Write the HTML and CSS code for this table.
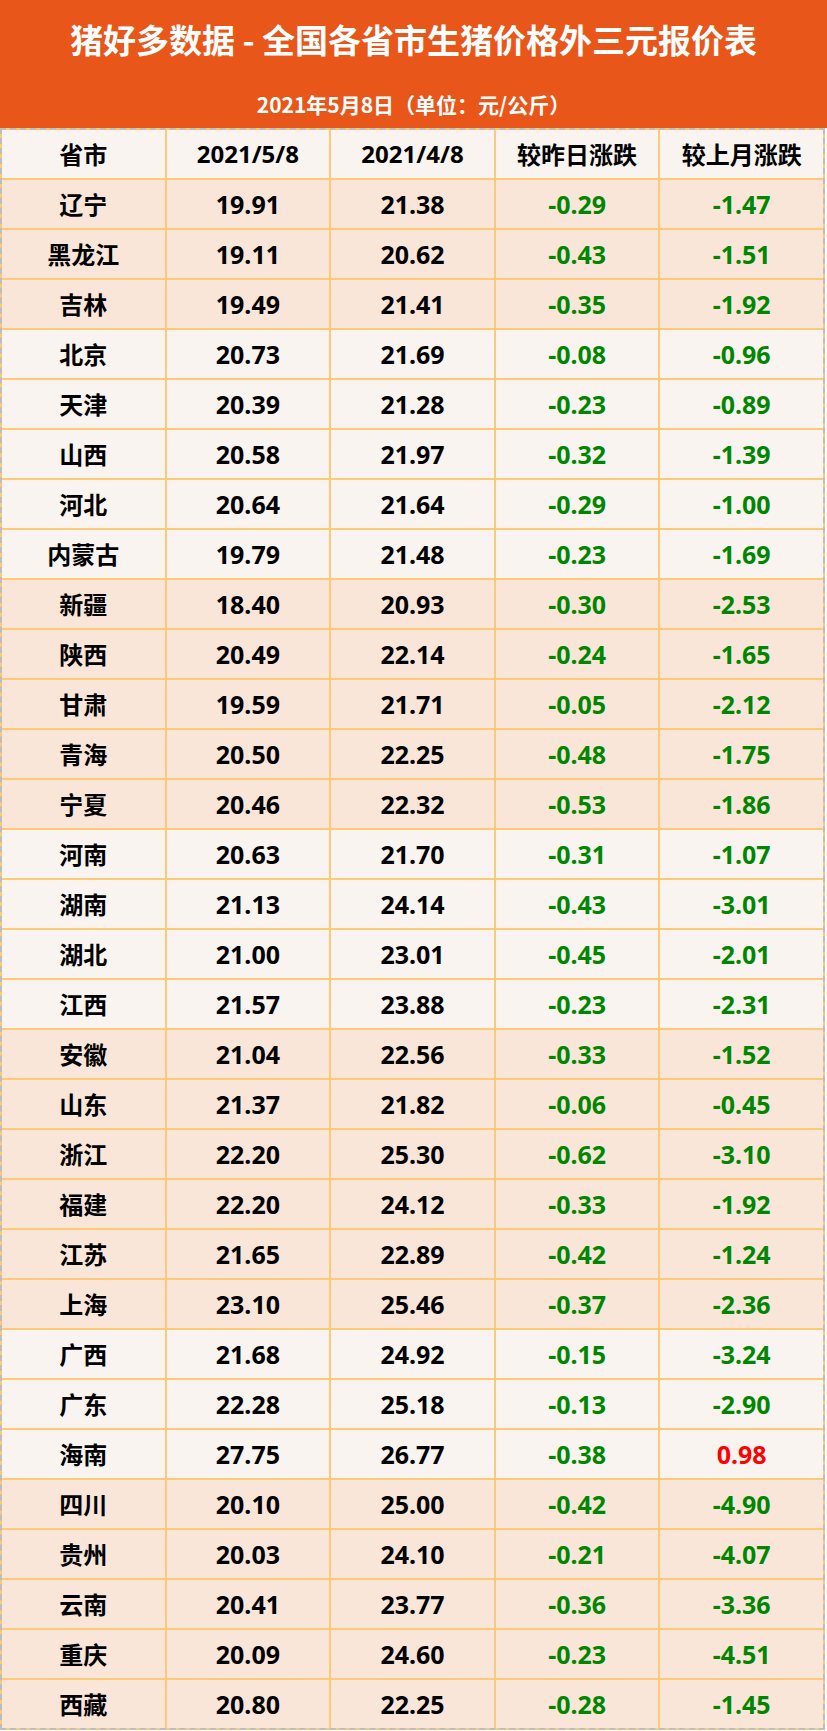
FILE: index.html
```html
<!DOCTYPE html>
<html lang="zh-CN">
<head>
<meta charset="utf-8">
<title>猪好多数据 - 全国各省市生猪价格外三元报价表</title>
<link rel="stylesheet" href="styles.css">
</head>
<body>
<header class="banner">
  <h1 class="title">猪好多数据 - 全国各省市生猪价格外三元报价表</h1>
  <p class="subtitle">2021年5月8日（单位：元/公斤）</p>
</header>
<div class="table">
  <div class="row head"><div>省市</div><div>2021/5/8</div><div>2021/4/8</div><div>较昨日涨跌</div><div>较上月涨跌</div></div>
  <div class="row pink"><div>辽宁</div><div>19.91</div><div>21.38</div><div class="down">-0.29</div><div class="down">-1.47</div></div>
  <div class="row pink"><div>黑龙江</div><div>19.11</div><div>20.62</div><div class="down">-0.43</div><div class="down">-1.51</div></div>
  <div class="row pink"><div>吉林</div><div>19.49</div><div>21.41</div><div class="down">-0.35</div><div class="down">-1.92</div></div>
  <div class="row light"><div>北京</div><div>20.73</div><div>21.69</div><div class="down">-0.08</div><div class="down">-0.96</div></div>
  <div class="row light"><div>天津</div><div>20.39</div><div>21.28</div><div class="down">-0.23</div><div class="down">-0.89</div></div>
  <div class="row light"><div>山西</div><div>20.58</div><div>21.97</div><div class="down">-0.32</div><div class="down">-1.39</div></div>
  <div class="row light"><div>河北</div><div>20.64</div><div>21.64</div><div class="down">-0.29</div><div class="down">-1.00</div></div>
  <div class="row light"><div>内蒙古</div><div>19.79</div><div>21.48</div><div class="down">-0.23</div><div class="down">-1.69</div></div>
  <div class="row pink"><div>新疆</div><div>18.40</div><div>20.93</div><div class="down">-0.30</div><div class="down">-2.53</div></div>
  <div class="row pink"><div>陕西</div><div>20.49</div><div>22.14</div><div class="down">-0.24</div><div class="down">-1.65</div></div>
  <div class="row pink"><div>甘肃</div><div>19.59</div><div>21.71</div><div class="down">-0.05</div><div class="down">-2.12</div></div>
  <div class="row pink"><div>青海</div><div>20.50</div><div>22.25</div><div class="down">-0.48</div><div class="down">-1.75</div></div>
  <div class="row pink"><div>宁夏</div><div>20.46</div><div>22.32</div><div class="down">-0.53</div><div class="down">-1.86</div></div>
  <div class="row light"><div>河南</div><div>20.63</div><div>21.70</div><div class="down">-0.31</div><div class="down">-1.07</div></div>
  <div class="row light"><div>湖南</div><div>21.13</div><div>24.14</div><div class="down">-0.43</div><div class="down">-3.01</div></div>
  <div class="row light"><div>湖北</div><div>21.00</div><div>23.01</div><div class="down">-0.45</div><div class="down">-2.01</div></div>
  <div class="row light"><div>江西</div><div>21.57</div><div>23.88</div><div class="down">-0.23</div><div class="down">-2.31</div></div>
  <div class="row pink"><div>安徽</div><div>21.04</div><div>22.56</div><div class="down">-0.33</div><div class="down">-1.52</div></div>
  <div class="row pink"><div>山东</div><div>21.37</div><div>21.82</div><div class="down">-0.06</div><div class="down">-0.45</div></div>
  <div class="row pink"><div>浙江</div><div>22.20</div><div>25.30</div><div class="down">-0.62</div><div class="down">-3.10</div></div>
  <div class="row pink"><div>福建</div><div>22.20</div><div>24.12</div><div class="down">-0.33</div><div class="down">-1.92</div></div>
  <div class="row pink"><div>江苏</div><div>21.65</div><div>22.89</div><div class="down">-0.42</div><div class="down">-1.24</div></div>
  <div class="row pink"><div>上海</div><div>23.10</div><div>25.46</div><div class="down">-0.37</div><div class="down">-2.36</div></div>
  <div class="row light"><div>广西</div><div>21.68</div><div>24.92</div><div class="down">-0.15</div><div class="down">-3.24</div></div>
  <div class="row light"><div>广东</div><div>22.28</div><div>25.18</div><div class="down">-0.13</div><div class="down">-2.90</div></div>
  <div class="row light"><div>海南</div><div>27.75</div><div>26.77</div><div class="down">-0.38</div><div class="up">0.98</div></div>
  <div class="row pink"><div>四川</div><div>20.10</div><div>25.00</div><div class="down">-0.42</div><div class="down">-4.90</div></div>
  <div class="row pink"><div>贵州</div><div>20.03</div><div>24.10</div><div class="down">-0.21</div><div class="down">-4.07</div></div>
  <div class="row pink"><div>云南</div><div>20.41</div><div>23.77</div><div class="down">-0.36</div><div class="down">-3.36</div></div>
  <div class="row pink"><div>重庆</div><div>20.09</div><div>24.60</div><div class="down">-0.23</div><div class="down">-4.51</div></div>
  <div class="row pink"><div>西藏</div><div>20.80</div><div>22.25</div><div class="down">-0.28</div><div class="down">-1.45</div></div>
</div>
</body>
</html>
```

FILE: styles.css
```css
html, body {
  margin: 0;
  padding: 0;
  background: #ffffff;
}

body {
  width: 827px;
  font-family: "Noto Sans", "Noto Sans CJK SC", sans-serif;
  font-weight: 700;
  color: #000000;
}

.banner {
  box-sizing: border-box;
  height: 128px;
  background: #E9561A;
  color: #ffffff;
  display: flex;
  flex-direction: column;
  align-items: center;
  padding-top: 19px;
}

.title {
  margin: 0;
  font-family: "Noto Sans CJK SC", sans-serif;
  font-size: 33px;
  line-height: 40px;
  font-weight: 700;
}

.subtitle {
  margin: 33px 0 0;
  font-family: "Noto Sans CJK SC", sans-serif;
  font-size: 21px;
  line-height: 24px;
  font-weight: 700;
}

.table {
  width: 825px;
  box-sizing: border-box;
  border: 2px dashed #BDBDBD;
  background: #FFC977;
  display: flex;
  flex-direction: column;
  row-gap: 2px;
}

.row {
  display: grid;
  grid-template-columns: repeat(5, 1fr);
  column-gap: 2px;
  height: 48px;
}

.row > div {
  display: flex;
  align-items: center;
  justify-content: center;
  font-size: 25px;
  line-height: 1;
}

.head > div,
.light > div {
  background: #F9F4F0;
}

.pink > div {
  background: #FAE5D9;
}

.row > div:first-child,
.head > div {
  font-family: "Noto Sans CJK SC", sans-serif;
  font-size: 24px;
}

.head > div:nth-child(2),
.head > div:nth-child(3) {
  font-family: "Noto Sans", "Noto Sans CJK SC", sans-serif;
}

.down {
  color: #008600;
}

.up {
  color: #FF0000;
}
```
